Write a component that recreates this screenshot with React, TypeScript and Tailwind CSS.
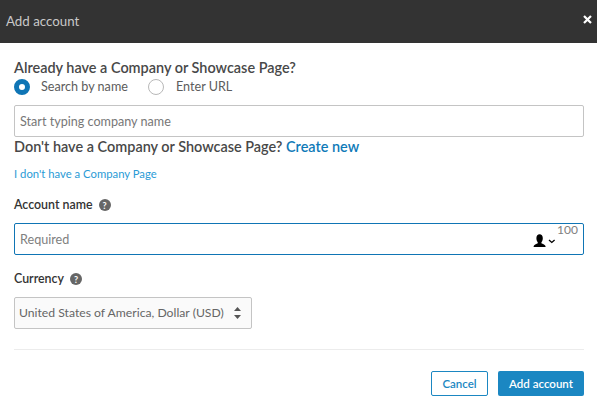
import React from 'react';

const HelpIcon = () => (
  <span className="flex h-3 w-3 items-center justify-center rounded-full bg-[#666666] text-[9px] font-bold leading-none text-white">?</span>
);

const UserMenuIcon = () => (
  <svg width="23" height="16" viewBox="0 0 23 16" className="mt-[2px] text-black">
    <path d="M0.500 15c.3-2.200 2.100-2.900 3.900-3.500.5-.3.5-1 .2-1.500C3.800 9 3.400 7.600 3.400 6c0-2.400 1.300-3.800 3.200-3.800S9.800 3.600 9.800 6c0 1.600-.4 3-1.200 4-.3.5-.3 1.200.2 1.500 1.800.6 3.600 1.300 3.900 3.500z" fill="currentColor" />
    <path d="M16 8l2.800 2.500L21.600 8" fill="none" stroke="currentColor" strokeWidth="1.300" />
  </svg>
);

export default function App() {
  return (
    <div className="h-[408px] w-[597px] overflow-hidden bg-white font-['Lato',sans-serif] text-[#4a4a4a]">
      {/* Header */}
      <div className="flex h-[43px] items-center justify-between bg-[#333333] pl-[6px] pr-[5px]">
        <h1 className="pt-[1px] text-[13.300px] text-[#c9c9c9]">Add account</h1>
        <svg width="9" height="9" viewBox="0 0 9 9" className="-mt-[5px]">
          <path d="M1 1l7 7M8 1L1 8" stroke="white" strokeWidth="2.200" />
        </svg>
      </div>

      <div className="pl-[14px] pr-[13px]">
        <p className="mt-[16px] h-[18px] text-[14.450px] font-semibold leading-[18px] text-[#484848]">Already have a Company or Showcase Page?</p>

        <div className="mt-[2px] flex h-[16px] items-center text-[12.600px] text-[#5c5c5c]">
          <span className="h-4 w-4 rounded-full border-[5px] border-[#0f75b5] bg-white" />
          <span className="ml-[11px] w-[87px] whitespace-nowrap">Search by name</span>
          <span className="ml-[20px] h-4 w-4 rounded-full border border-[#b8b8b8] bg-white" />
          <span className="ml-[12px]">Enter URL</span>
        </div>

        <div className="mt-[10px] flex h-[32px] items-center rounded-[2px] border border-[#c4c4c4] bg-white px-[5px] pt-[2px] text-[12.600px] text-[#777777]">
          Start typing company name
        </div>

        <p className="h-[20px] text-[14.450px] font-semibold leading-[20px] text-[#484848]">
          Don't have a Company or Showcase Page? <a className="text-[#0f7ab8]">Create new</a>
        </p>

        <a className="mt-[9px] block h-[16px] text-[11.300px] leading-[16px] text-[#2a9bd6]">I don't have a Company Page</a>

        <div className="mt-[14px] flex h-[18px] items-center gap-[6px]">
          <label className="text-[12.400px] font-semibold text-[#333333]">Account name</label>
          <HelpIcon />
        </div>

        <div className="relative mt-[9px] flex h-[32px] items-center justify-between rounded-[2px] border border-[#0f75b5] bg-white pl-[5px] pr-[27px] text-[12.600px] text-[#808080]">
          <span className="pt-[3px]">Required</span>
          <UserMenuIcon />
          <span className="absolute right-[5px] top-0 text-[12px] leading-[12px] text-[#808080]">100</span>
        </div>

        <div className="mt-[15px] flex h-[18px] items-center gap-[6px]">
          <label className="text-[12.400px] font-semibold text-[#333333]">Currency</label>
          <HelpIcon />
        </div>

        <div className="mt-[9px] flex h-[32px] w-[238px] items-center justify-between rounded-[2px] border border-[#c4c4c4] bg-[#fafafa] pl-[4px] pr-[10px] text-[12.200px] text-[#666666]">
          United States of America, Dollar (USD)
          <svg width="7" height="12" viewBox="0 0 7 12" className="text-[#555555]">
            <path d="M3.500 0L7 4H0zM3.500 12L0 8h7z" fill="currentColor" />
          </svg>
        </div>

        <div className="mt-[20px] border-t border-[#ececec]" />

        <div className="mt-[21px] flex justify-end gap-[10px]">
          <button className="h-[25px] w-[57px] rounded-[2px] border border-[#1b87c2] bg-white text-[11.500px] font-semibold text-[#1b87c2]">Cancel</button>
          <button className="h-[25px] w-[86px] rounded-[2px] bg-[#1b87c2] text-[11.500px] font-semibold text-white">Add account</button>
        </div>
      </div>
    </div>
  );
}
